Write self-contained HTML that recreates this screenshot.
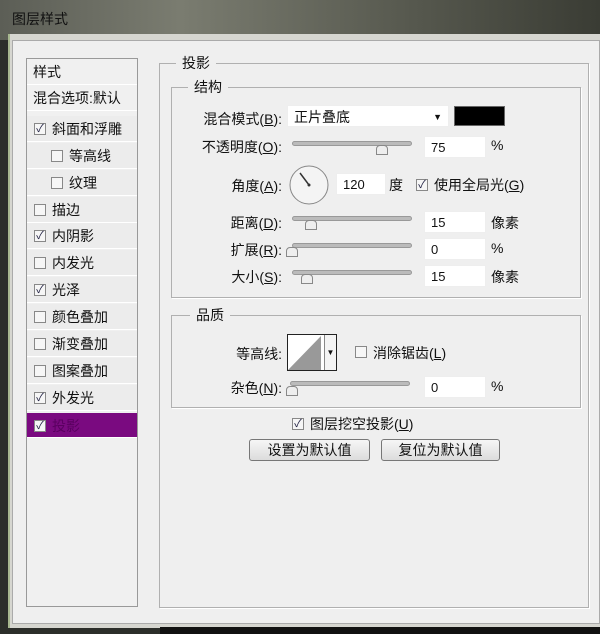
<!DOCTYPE html>
<html><head><meta charset="utf-8"><style>
*{margin:0;padding:0;box-sizing:border-box}
body{width:600px;height:634px;overflow:hidden;background:#2c2e2a;font-family:"Liberation Sans","Noto Sans CJK SC",sans-serif;font-size:14px;color:#111;position:relative}
.a{position:absolute}
.title{left:0;top:0;width:600px;height:40px;background:linear-gradient(90deg,#5c5e56,#7a7c70 30%,#55574d 70%,#3a3c34);}
.title span{position:absolute;left:12px;top:9px;font-size:14px;color:#111}
.win{left:8px;top:34px;width:592px;height:594px;background:#d6d6d0;border-left:2px solid #a8b890}
.dlg{left:12px;top:40px;width:588px;height:584px;background:#efefef;border:1px solid #aaa}
.lp{left:26px;top:58px;width:112px;height:549px;border:1px solid #999;background:#f0f0f0}
.row{position:absolute;left:0;width:110px;height:26px;border-bottom:1px solid #fff;background:#ececec;font-size:14px;line-height:26px}
.cb{position:absolute;width:12px;height:12px;border:1px solid #888;background:#f6f6f6;top:7px;font-size:11px;line-height:10px;text-align:center;color:#224}
.grp{border:1px solid #b0b0b0;box-shadow:1px 1px 0 #fff}
.lg{position:absolute;background:#efefef;padding:0 6px;font-size:14px}
.lbl{position:absolute;font-size:14px;text-align:right;width:120px}
.inp{position:absolute;background:#fff;height:22px;border:1px solid #eee;font-size:13px;line-height:22px;padding-left:6px}
.sl{position:absolute;height:5px;background:#bbb;border:1px solid #999;border-radius:3px;width:120px}
.th{position:absolute;width:12px;height:10px;border:1px solid #888;background:#eee;border-radius:4px 4px 0 0}
.btn{position:absolute;height:22px;border:1px solid #777;border-radius:3px;background:linear-gradient(#f6f6f6,#dcdcdc);font-size:14px;text-align:center;line-height:20px}
</style></head><body>
<div class="a title"><span>图层样式</span></div>
<div class="a win"></div>
<div class="a dlg"></div>
<div class="a lp">
<div class="row" style="top:0;background:#f0f0f0;padding-left:6px">样式</div>
<div class="row" style="top:26px;background:#f0f0f0;padding-left:6px">混合选项:默认</div>
<div class="row" style="top:57px"><span class="cb" style="left:7px">✓</span><span style="position:absolute;left:25px">斜面和浮雕</span></div>
<div class="row" style="top:84px"><span class="cb" style="left:24px"></span><span style="position:absolute;left:42px">等高线</span></div>
<div class="row" style="top:111px"><span class="cb" style="left:24px"></span><span style="position:absolute;left:42px">纹理</span></div>
<div class="row" style="top:138px"><span class="cb" style="left:7px"></span><span style="position:absolute;left:25px">描边</span></div>
<div class="row" style="top:164px"><span class="cb" style="left:7px">✓</span><span style="position:absolute;left:25px">内阴影</span></div>
<div class="row" style="top:191px"><span class="cb" style="left:7px"></span><span style="position:absolute;left:25px">内发光</span></div>
<div class="row" style="top:218px"><span class="cb" style="left:7px">✓</span><span style="position:absolute;left:25px">光泽</span></div>
<div class="row" style="top:245px"><span class="cb" style="left:7px"></span><span style="position:absolute;left:25px">颜色叠加</span></div>
<div class="row" style="top:272px"><span class="cb" style="left:7px"></span><span style="position:absolute;left:25px">渐变叠加</span></div>
<div class="row" style="top:299px"><span class="cb" style="left:7px"></span><span style="position:absolute;left:25px">图案叠加</span></div>
<div class="row" style="top:326px"><span class="cb" style="left:7px">✓</span><span style="position:absolute;left:25px">外发光</span></div>
<div class="row" style="top:354px;background:#7a0a80;height:25px"><span class="cb" style="left:7px">✓</span><span style="position:absolute;left:25px;color:#5a0060">投影</span></div>
</div>

<div class="a grp" style="left:159px;top:63px;width:430px;height:545px"></div>
<div class="lg" style="left:176px;top:53px">投影</div>
<div class="a grp" style="left:171px;top:87px;width:410px;height:211px"></div>
<div class="lg" style="left:188px;top:77px">结构</div>

<div class="lbl" style="left:162px;top:109px">混合模式(<u>B</u>):</div>
<div class="inp" style="left:287px;top:105px;width:162px;font-size:14px">正片叠底<span style="position:absolute;right:6px;font-size:9px">▼</span></div>
<div class="a" style="left:454px;top:106px;width:51px;height:20px;background:#000;border:1px solid #666"></div>

<div class="lbl" style="left:162px;top:137px">不透明度(<u>O</u>):</div>
<div class="sl" style="left:292px;top:141px"></div><div class="th" style="left:376px;top:145px"></div>
<div class="inp" style="left:424px;top:136px;width:62px">75</div><div class="a" style="left:491px;top:137px">%</div>

<div class="lbl" style="left:162px;top:176px">角度(<u>A</u>):</div>
<svg class="a" style="left:288px;top:164px" width="42" height="42"><circle cx="21" cy="21" r="19" fill="#f4f4f4" stroke="#888"/><line x1="21" y1="21" x2="12" y2="9" stroke="#333" stroke-width="1.5"/><circle cx="21" cy="21" r="1.5" fill="#333"/></svg>
<div class="inp" style="left:336px;top:173px;width:50px">120</div>
<div class="a" style="left:389px;top:175px">度</div>
<span class="cb" style="left:416px;top:179px">✓</span>
<div class="a" style="left:434px;top:175px">使用全局光(<u>G</u>)</div>

<div class="lbl" style="left:162px;top:213px">距离(<u>D</u>):</div>
<div class="sl" style="left:292px;top:216px"></div><div class="th" style="left:305px;top:220px"></div>
<div class="inp" style="left:424px;top:211px;width:62px">15</div><div class="a" style="left:491px;top:213px">像素</div>

<div class="lbl" style="left:162px;top:240px">扩展(<u>R</u>):</div>
<div class="sl" style="left:292px;top:243px"></div><div class="th" style="left:286px;top:247px"></div>
<div class="inp" style="left:424px;top:238px;width:62px">0</div><div class="a" style="left:491px;top:240px">%</div>

<div class="lbl" style="left:162px;top:267px">大小(<u>S</u>):</div>
<div class="sl" style="left:292px;top:270px"></div><div class="th" style="left:301px;top:274px"></div>
<div class="inp" style="left:424px;top:265px;width:62px">15</div><div class="a" style="left:491px;top:267px">像素</div>

<div class="a grp" style="left:171px;top:315px;width:410px;height:93px"></div>
<div class="lg" style="left:190px;top:305px">品质</div>
<div class="lbl" style="left:162px;top:344px">等高线:</div>
<div class="a" style="left:287px;top:334px;width:50px;height:37px;border:1px solid #222;background:#fff"><svg width="37" height="35" style="position:absolute;left:0;top:0"><polygon points="0,35 33,1 33,35" fill="#999"/></svg><div style="position:absolute;right:0;top:0;width:12px;height:35px;border-left:1px solid #888;background:#f4f4f4;font-size:8px;text-align:center;line-height:35px">▼</div></div>
<span class="cb" style="left:355px;top:346px"></span>
<div class="a" style="left:373px;top:343px">消除锯齿(<u>L</u>)</div>
<div class="lbl" style="left:162px;top:378px">杂色(<u>N</u>):</div>
<div class="sl" style="left:290px;top:381px"></div><div class="th" style="left:286px;top:386px"></div>
<div class="inp" style="left:424px;top:376px;width:62px">0</div><div class="a" style="left:491px;top:378px">%</div>

<span class="cb" style="left:292px;top:418px">✓</span>
<div class="a" style="left:310px;top:414px">图层挖空投影(<u>U</u>)</div>
<div class="btn" style="left:249px;top:439px;width:121px">设置为默认值</div>
<div class="btn" style="left:381px;top:439px;width:119px">复位为默认值</div>
<div class="a" style="left:160px;top:627px;width:440px;height:7px;background:#111"></div>
</body></html>
